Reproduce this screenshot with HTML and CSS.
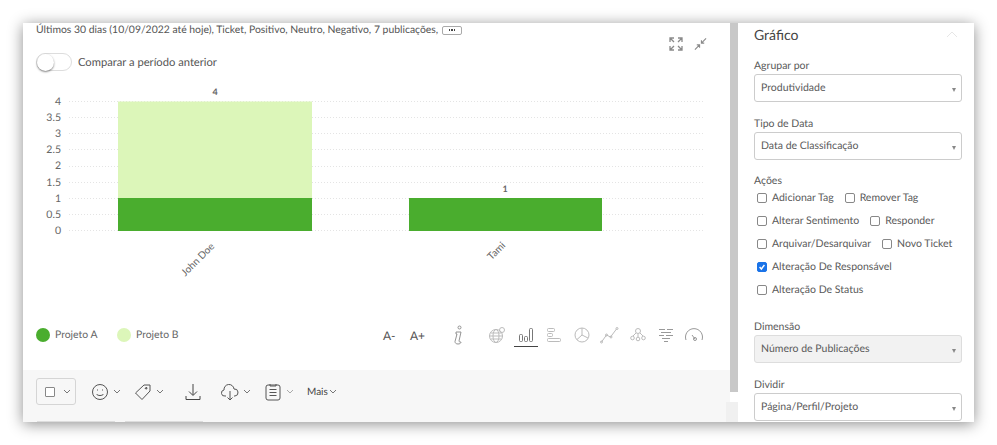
FILE: index.html
```html
<!DOCTYPE html>
<html lang="pt">
<head>
    <meta charset="UTF-8">
    <title>Gráfico</title>
    <link rel="stylesheet" href="styles.css">
</head>
<body>
    <div class="window">
        <div class="main">
            <div class="filters">
                <span>Últimos 30 dias (10/09/2022 até hoje), Ticket, Positivo, Neutro, Negativo, 7 publicações,</span>
                <span class="more-btn"><i></i><i></i><i></i></span>
            </div>

            <div class="view-icons">
                <svg width="14" height="14" viewBox="0 0 14 14" fill="none" stroke="#8a8a8a" stroke-width="1.3">
                    <path d="M1 5V1h4M1 1l4 4M9 1h4v4M13 1L9 5M1 9v4h4M1 13l4-4M13 9v4H9M13 13L9 9"/>
                </svg>
                <svg width="13" height="14" viewBox="0 0 14 14" fill="none" stroke="#8a8a8a" stroke-width="1.2">
                    <path d="M1 13l5-5M3 8h3v3M13 1L8 6M8 3v3h3"/>
                </svg>
            </div>

            <div class="compare">
                <span class="toggle"><span class="knob"></span></span>
                <span>Comparar a período anterior</span>
            </div>

            <!-- Chart -->
            <svg class="chart" width="707" height="228" viewBox="0 0 707 228">
                <g class="grid">
                    <line x1="46" x2="682" y1="19.5" y2="19.5"/>
                    <line x1="46" x2="682" y1="35.5" y2="35.5"/>
                    <line x1="46" x2="682" y1="51.5" y2="51.5"/>
                    <line x1="46" x2="682" y1="67.5" y2="67.5"/>
                    <line x1="46" x2="682" y1="84.5" y2="84.5"/>
                    <line x1="46" x2="682" y1="100.5" y2="100.5"/>
                    <line x1="46" x2="682" y1="116.5" y2="116.5"/>
                    <line x1="46" x2="682" y1="132.5" y2="132.5"/>
                    <line x1="46" x2="682" y1="148.5" y2="148.5"/>
                </g>
                <g class="y-labels">
                    <text x="38" y="23">4</text>
                    <text x="38" y="39">3.5</text>
                    <text x="38" y="55">3</text>
                    <text x="38" y="71">2.5</text>
                    <text x="38" y="87">2</text>
                    <text x="38" y="104">1.5</text>
                    <text x="38" y="120">1</text>
                    <text x="38" y="136">0.5</text>
                    <text x="38" y="152">0</text>
                </g>
                <rect x="95" y="19.5" width="194" height="96.5" fill="#dcf6b9"/>
                <rect x="95" y="116" width="194" height="33" fill="#4aad2e"/>
                <rect x="386" y="116" width="193" height="33" fill="#4aad2e"/>
                <text class="bar-label" x="192" y="13">4</text>
                <text class="bar-label" x="482" y="110">1</text>
                <text class="x-label" transform="translate(192 165) rotate(-45)">John Doe</text>
                <text class="x-label" transform="translate(483 164) rotate(-45)">Tami</text>
            </svg>

            <div class="chart-footer">
                <div class="legend">
                    <span class="dot dot-a"></span><span class="legend-name">Projeto A</span>
                    <span class="dot dot-b"></span><span>Projeto B</span>
                </div>
                <div class="chart-tools">
                    <span class="font-btn">A-</span>
                    <span class="font-btn">A+</span>
                    <svg class="info-icon" width="10" height="20" viewBox="0 0 10 20" fill="none" stroke="#888" stroke-width="0.9">
                        <circle cx="6.5" cy="2.5" r="1.5"/>
                        <path d="M3 7h5L6 16c0 1 1 1 2 1 0 1-1 2-3 2s-3-1-3-2.500L4 9H3z"/>
                    </svg>
                    <div class="chart-types">
                        <span class="type">
                            <svg width="18" height="18" viewBox="0 0 18 18" fill="none" stroke="#bbb">
                                <circle cx="8" cy="10" r="6.500"/>
                                <ellipse cx="8" cy="10" rx="3" ry="6.500"/>
                                <path d="M1.500 10h13M2.500 7h11M2.500 13h11"/>
                                <circle cx="14" cy="4" r="2.500"/>
                            </svg>
                        </span>
                        <span class="type active">
                            <svg width="18" height="18" viewBox="0 0 18 18" fill="none" stroke="#777">
                                <rect x="2.500" y="8.500" width="3" height="7" rx="1"/>
                                <rect x="7.500" y="10.500" width="3" height="5" rx="1"/>
                                <rect x="12.500" y="2.500" width="3" height="13" rx="1"/>
                            </svg>
                        </span>
                        <span class="type">
                            <svg width="18" height="18" viewBox="0 0 18 18" fill="none" stroke="#bbb">
                                <rect x="2.500" y="2.500" width="7" height="3" rx="1"/>
                                <rect x="2.500" y="7.500" width="5" height="3" rx="1"/>
                                <rect x="2.500" y="12.500" width="13" height="3" rx="1"/>
                            </svg>
                        </span>
                        <span class="type">
                            <svg width="18" height="18" viewBox="0 0 18 18" fill="none" stroke="#bbb">
                                <circle cx="9" cy="9" r="7"/>
                                <path d="M9 2v7l6 3M9 9l-5 4.500"/>
                            </svg>
                        </span>
                        <span class="type">
                            <svg width="20" height="18" viewBox="0 0 20 18" fill="none" stroke="#bbb">
                                <path d="M1.500 16l5-7 4 2 6-8"/>
                                <circle cx="1.500" cy="16" r="1"/>
                                <circle cx="6.500" cy="9" r="1"/>
                                <circle cx="11" cy="11" r="1"/>
                                <circle cx="17" cy="2.500" r="1"/>
                            </svg>
                        </span>
                        <span class="type">
                            <svg width="16" height="18" viewBox="0 0 16 18" fill="none" stroke="#bbb">
                                <circle cx="8" cy="5" r="2.500"/>
                                <circle cx="2.500" cy="12" r="1.800"/>
                                <circle cx="8" cy="13" r="1.800"/>
                                <circle cx="13.500" cy="12" r="1.800"/>
                                <path d="M8 8v3M6 7l-3 3M10 7l3 3"/>
                            </svg>
                        </span>
                        <span class="type">
                            <svg width="16" height="18" viewBox="0 0 16 18" fill="none" stroke="#999">
                                <path d="M1 3.500h6M9 3.500h6M3 6.500h10M1 9.500h5M8 9.500h7M4 12.500h8M6 15.500h4"/>
                            </svg>
                        </span>
                        <span class="type">
                            <svg width="20" height="18" viewBox="0 0 20 18" fill="none" stroke="#999">
                                <path d="M2 14a8.500 8.500 0 1 1 16 0"/>
                                <path d="M8 9l3 4"/>
                                <circle cx="11" cy="13" r="1.500"/>
                            </svg>
                        </span>
                    </div>
                </div>
            </div>

            <!-- Bottom toolbar -->
            <div class="toolbar">
                <span class="select-all"><span class="box"></span><svg class="chev" width="8" height="5" viewBox="0 0 8 5"><path d="M1 1l3 3 3-3"/></svg></span>
                <svg class="tool smile" width="18" height="18" viewBox="0 0 18 18" fill="none" stroke="#555">
                    <circle cx="9" cy="9" r="7.500"/>
                    <path d="M5.500 11c1 2 6 2 7 0"/>
                    <path d="M6.500 6.500v1M11.500 6.500v1"/>
                </svg>
                <svg class="chev" width="8" height="5" viewBox="0 0 8 5"><path d="M1 1l3 3 3-3"/></svg>
                <svg class="tool tag" width="18" height="18" viewBox="0 0 18 18" fill="none" stroke="#555">
                    <path d="M1.500 10L10 2h6v6l-8 8.500z"/>
                    <path d="M11 5.500l2 .500-.500-2z"/>
                </svg>
                <svg class="chev" width="8" height="5" viewBox="0 0 8 5"><path d="M1 1l3 3 3-3"/></svg>
                <svg class="tool download" width="16" height="18" viewBox="0 0 16 18" fill="none" stroke="#444">
                    <path d="M8 1v11M4 8.500l4 4 4-4M1 13v3.500h14V13"/>
                </svg>
                <svg class="tool cloud" width="18" height="18" viewBox="0 0 18 18" fill="none" stroke="#555">
                    <path d="M5 13H4a3 3 0 0 1-1-6 5 5 0 0 1 10-1 3.500 3.500 0 0 1 1 7h-1"/>
                    <path d="M9 8v9M6.500 14.500L9 17l2.500-2.500"/>
                </svg>
                <svg class="chev" width="8" height="5" viewBox="0 0 8 5"><path d="M1 1l3 3 3-3"/></svg>
                <svg class="tool notes" width="16" height="18" viewBox="0 0 16 18" fill="none" stroke="#555">
                    <rect x="1" y="2" width="14" height="15" rx="2"/>
                    <path d="M5 1v2h6V1M4.500 6.500h7M4.500 9.500h7M4.500 12.500h7"/>
                </svg>
                <svg class="chev faint" width="8" height="5" viewBox="0 0 8 5"><path d="M1 1l3 3 3-3"/></svg>
                <span class="more-label">Mais</span>
                <svg class="chev" width="8" height="5" viewBox="0 0 8 5"><path d="M1 1l3 3 3-3"/></svg>
            </div>
            <div class="tabs"><span></span><span></span></div>
            <div class="corner"></div>
        </div>

        <div class="scrollbar"></div>

        <aside class="panel">
            <div class="panel-head">
                <h2>Gráfico</h2>
                <svg width="12" height="7" viewBox="0 0 12 7" fill="none" stroke="#e6e6e6"><path d="M1 6l5-5 5 5"/></svg>
            </div>

            <div class="field first">
                <label>Agrupar por</label>
                <div class="select">Produtividade</div>
            </div>
            <div class="field">
                <label>Tipo de Data</label>
                <div class="select">Data de Classificação</div>
            </div>

            <div class="actions">
                <label>Ações</label>
                <div class="check-row"><span class="check"><i></i>Adicionar Tag</span><span class="check"><i></i>Remover Tag</span></div>
                <div class="check-row"><span class="check"><i></i>Alterar Sentimento</span><span class="check"><i></i>Responder</span></div>
                <div class="check-row"><span class="check"><i></i>Arquivar/Desarquivar</span><span class="check"><i></i>Novo Ticket</span></div>
                <div class="check-row"><span class="check"><i class="checked"><svg width="10" height="10" viewBox="0 0 10 10" fill="none" stroke="#fff" stroke-width="1.800"><path d="M2 5l2.200 2.500L8 2.500"/></svg></i>Alteração De Responsável</span></div>
                <div class="check-row"><span class="check"><i></i>Alteração De Status</span></div>
            </div>

            <div class="field dimension">
                <label>Dimensão</label>
                <div class="select disabled">Número de Publicações</div>
            </div>
            <div class="field">
                <label>Dividir</label>
                <div class="select">Página/Perfil/Projeto</div>
            </div>
        </aside>
    </div>
</body>
</html>
```

FILE: styles.css
```css
/* Resetting some defaults */
* {
    margin: 0;
    padding: 0;
    box-sizing: border-box;
}

body {
    font-family: 'Lato', sans-serif;
    text-rendering: geometricPrecision;
    background: #fff;
    color: #555;
    padding: 23px;
    height: 445px;
    overflow: hidden;
}

.window {
    display: flex;
    width: 951px;
    height: 399px;
    background: #fff;
    box-shadow: 0 2px 14px rgba(0, 0, 0, 0.45);
    overflow: hidden;
}

/* Main column */
.main {
    position: relative;
    width: 707px;
    height: 399px;
    display: flex;
    flex-direction: column;
}

.filters {
    display: flex;
    align-items: center;
    gap: 4px;
    height: 14px;
    padding-left: 13px;
    font-size: 10.4px;
    color: #555;
}

.more-btn {
    display: flex;
    align-items: center;
    justify-content: center;
    gap: 1px;
    width: 20px;
    height: 9px;
    border: 1px solid #aaa;
    border-radius: 2px;
}

.more-btn i {
    width: 1.5px;
    height: 1.5px;
    background: #444;
}

.view-icons {
    position: absolute;
    top: 14px;
    left: 646px;
    display: flex;
    gap: 11px;
}

.compare {
    display: flex;
    align-items: center;
    gap: 6px;
    margin-top: 16px;
    padding-left: 13px;
    height: 18px;
    font-size: 11.2px;
}

.toggle {
    display: block;
    width: 36px;
    height: 18px;
    border: 1px solid #ddd;
    border-radius: 9px;
}

.knob {
    display: block;
    width: 17px;
    height: 17px;
    border-radius: 50%;
    background: #fff;
    box-shadow: 0 1px 2px rgba(0, 0, 0, 0.5);
}

.chart {
    display: block;
    margin-top: 11px;
    flex: none;
}

.grid line {
    stroke: #e4e4e4;
    stroke-dasharray: 1 2;
}

.y-labels text {
    font-size: 10.5px;
    fill: #666;
    text-anchor: end;
}

.bar-label {
    font-size: 9px;
    font-weight: 700;
    fill: #666;
    text-anchor: middle;
}

.x-label {
    font-size: 10px;
    fill: #666;
    text-anchor: end;
}

.chart-footer {
    display: flex;
    justify-content: space-between;
    align-items: center;
    height: 30px;
    margin-top: 10px;
}

.legend {
    display: flex;
    align-items: center;
    padding-left: 13px;
    font-size: 10.4px;
    color: #666;
}

.dot {
    width: 14px;
    height: 14px;
    border-radius: 50%;
    margin-right: 5px;
}

.dot-a {
    background: #4aad2e;
}

.dot-b {
    background: #dcf6b9;
}

.legend-name {
    width: 62px;
}

.chart-tools {
    display: flex;
    align-items: center;
    padding-right: 22px;
}

.font-btn {
    width: 27px;
    font-size: 12px;
    color: #555;
}

.info-icon {
    margin-left: 16px;
    margin-right: 20px;
}

.chart-types {
    display: flex;
    align-items: center;
}

.type {
    display: flex;
    justify-content: center;
    align-items: center;
    width: 28px;
    height: 24px;
    border-bottom: 1px solid transparent;
}

.type.active {
    width: 24px;
    border-bottom-color: #444;
    margin-left: 3px;
    margin-right: 2px;
}

.toolbar {
    display: flex;
    align-items: center;
    height: 52px;
    margin-top: 20px;
    padding: 0 0 9px 13px;
    background: #f7f7f7;
    flex: none;
}

.select-all {
    display: flex;
    align-items: center;
    gap: 8px;
    width: 40px;
    height: 27px;
    padding-left: 8px;
    border: 1px solid #d5d5d5;
    border-radius: 3px;
    margin-right: 15px;
}

.box {
    width: 10px;
    height: 10px;
    border: 1px solid #888;
    border-radius: 1px;
    background: #fff;
}

.chev {
    flex: none;
    fill: none;
    stroke: #777;
}

.chev.faint {
    stroke: #aaa;
}

.tool {
    flex: none;
    margin-right: 4px;
}

.tag {
    margin-left: 13px;
}

.download {
    margin-left: 21px;
    margin-right: 0;
}

.cloud {
    margin-left: 20px;
}

.notes {
    margin-left: 14px;
    margin-right: 5px;
}

.more-label {
    margin-left: 13px;
    margin-right: 1px;
    font-size: 10px;
    color: #444;
}

.tabs {
    position: absolute;
    left: 14px;
    bottom: 0;
    display: flex;
    gap: 10px;
}

.tabs span {
    width: 78px;
    height: 1px;
    background: #ddd;
}

.corner {
    position: absolute;
    left: 703px;
    top: 379px;
    width: 12px;
    height: 20px;
    background: #f0f0f0;
}

.scrollbar {
    width: 8px;
    height: 369px;
    flex: none;
    background: #c8c8c8;
}

/* Right panel */
.panel {
    flex: 1;
    padding: 0 12px 0 16px;
    font-size: 10.5px;
    color: #5a5a5a;
}

.panel-head {
    display: flex;
    justify-content: space-between;
    align-items: center;
    height: 23px;
    padding-right: 4px;
}

.panel-head h2 {
    font-size: 14px;
    font-weight: 400;
    color: #444;
}

.field label {
    display: block;
    height: 14px;
    line-height: 16px;
    margin-bottom: 2px;
}

.actions label {
    display: block;
    height: 12px;
    line-height: 14px;
}

.field {
    margin-top: 14px;
}

.field.first {
    margin-top: 12px;
}

.select {
    position: relative;
    height: 28px;
    line-height: 26px;
    padding-left: 6px;
    border: 1px solid #ccc;
    border-radius: 3px;
    background: #fff;
}

.select::after {
    content: "";
    position: absolute;
    right: 5px;
    top: 13px;
    border-left: 2.5px solid transparent;
    border-right: 2.5px solid transparent;
    border-top: 4px solid #888;
}

.select.disabled {
    background: #f2f2f2;
    border-color: #ddd;
}

.actions {
    margin-top: 14px;
}

.check-row {
    display: flex;
    gap: 11px;
    height: 23px;
    padding-left: 3px;
    align-items: center;
}

.check {
    display: flex;
    align-items: center;
    gap: 5px;
}

.check i {
    display: flex;
    align-items: center;
    justify-content: center;
    width: 10px;
    height: 10px;
    border: 1px solid #888;
    border-radius: 2px;
    background: #fff;
}

.check i.checked {
    background: #1a73e8;
    border-color: #1a73e8;
}

.dimension {
    margin-top: 18px;
}
```
